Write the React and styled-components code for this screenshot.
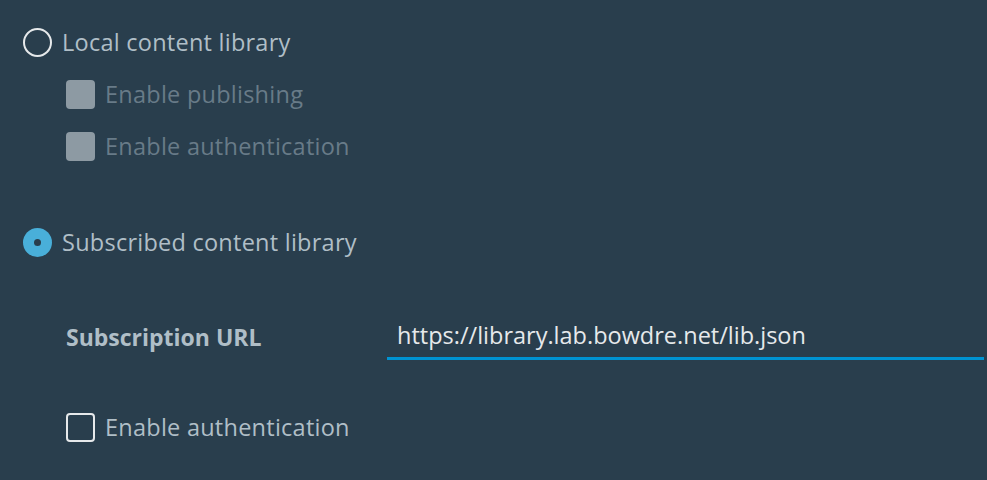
import React from "react";
import styled, { createGlobalStyle } from "styled-components";

const GlobalStyle = createGlobalStyle`
  html, body {
    margin: 0;
    padding: 0;
    background: #293e4d;
  }
  body {
    font-family: "Open Sans", "Liberation Sans", sans-serif;
  }
`;

const Page = styled.div`
  box-sizing: border-box;
  width: 987px;
  height: 480px;
  padding: 27px 0 0 23px;
  background-color: #293e4d;
  display: flex;
  flex-direction: column;
  overflow: hidden;
`;

const OptionRow = styled.label`
  display: flex;
  align-items: center;
  gap: 10px;
  height: 30px;
  margin-top: ${(p) => p.$top || 0}px;
  margin-left: ${(p) => p.$indent || 0}px;
  font-size: 23.5px;
  line-height: 30px;
  letter-spacing: 0.25px;
  color: ${(p) => (p.$disabled ? "#687b88" : "#b0bec7")};
`;

const Radio = styled.span`
  box-sizing: border-box;
  width: 29px;
  height: 29px;
  border-radius: 50%;
  flex: 0 0 29px;
  display: flex;
  align-items: center;
  justify-content: center;
  border: ${(p) => (p.$checked ? "none" : "2px solid #e6e9eb")};
  background-color: ${(p) => (p.$checked ? "#49afd9" : "transparent")};

  &::after {
    content: "";
    display: ${(p) => (p.$checked ? "block" : "none")};
    width: 7px;
    height: 7px;
    border-radius: 50%;
    background-color: #293e4d;
  }
`;

const Checkbox = styled.span`
  box-sizing: border-box;
  width: 29px;
  height: 29px;
  flex: 0 0 29px;
  border-radius: 4px;
  border: ${(p) => (p.$disabled ? "none" : "2px solid #e6e9eb")};
  background-color: ${(p) => (p.$disabled ? "#8d9aa3" : "transparent")};
`;

const Field = styled.div`
  display: flex;
  align-items: flex-end;
  margin-top: 57px;
  margin-left: 43px;
`;

const FieldLabel = styled.div`
  width: 321px;
  height: 46px;
  display: flex;
  align-items: center;
  font-size: 23px;
  font-weight: 700;
  color: #b0bec7;
`;

const UrlInput = styled.div`
  box-sizing: border-box;
  width: 597px;
  height: 46px;
  padding: 0 10px 2px;
  display: flex;
  align-items: center;
  border-bottom: 3px solid #0093d2;
  font-size: 23.5px;
  color: #e6e9eb;
`;

const App = () => {
  return (
    <Page>
      <GlobalStyle />
      <OptionRow>
        <Radio />
        Local content library
      </OptionRow>
      <OptionRow $indent={43} $top={22} $disabled>
        <Checkbox $disabled />
        Enable publishing
      </OptionRow>
      <OptionRow $indent={43} $top={22} $disabled>
        <Checkbox $disabled />
        Enable authentication
      </OptionRow>
      <OptionRow $top={66}>
        <Radio $checked />
        Subscribed content library
      </OptionRow>
      <Field>
        <FieldLabel>Subscription URL</FieldLabel>
        <UrlInput>https://library.lab.bowdre.net/lib.json</UrlInput>
      </Field>
      <OptionRow $indent={43} $top={52}>
        <Checkbox />
        Enable authentication
      </OptionRow>
    </Page>
  );
};

export default App;
